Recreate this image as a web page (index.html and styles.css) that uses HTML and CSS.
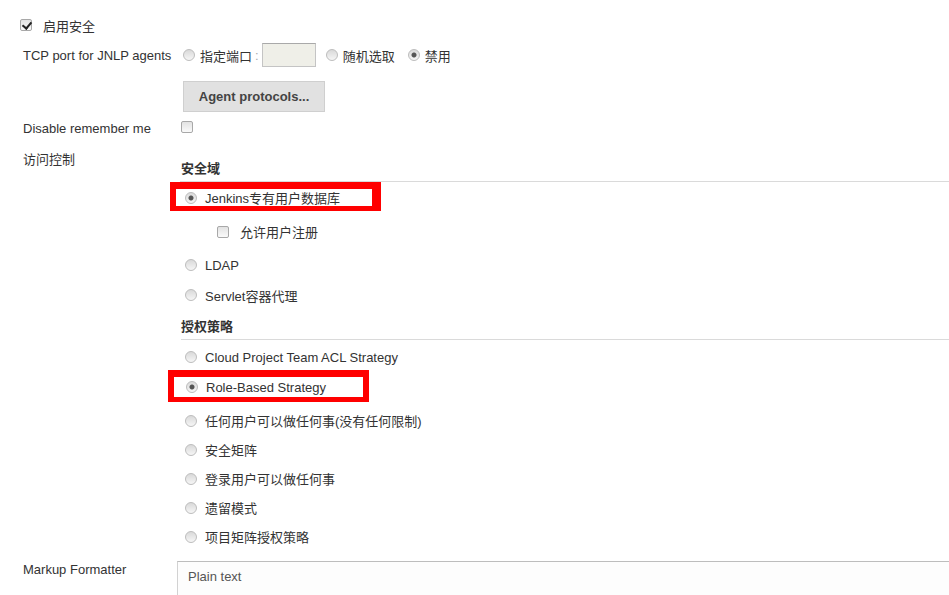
FILE: index.html
```html
<!DOCTYPE html>
<html lang="zh">

<head>
    <meta charset="UTF-8">
    <meta name="viewport" content="width=device-width, initial-scale=1.0">
    <title>Configure Global Security</title>
    <link rel="stylesheet" href="styles.css">
</head>

<body>
    <div id="wrapper">
        <div class="enable">
            <input type="checkbox" class="cb" checked>
            <span>启用安全</span>
        </div>

        <div class="entry tcp">
            <div class="label">TCP port for JNLP agents</div>
            <div class="field ports">
                <label class="choice"><input type="radio" name="port" class="rd">指定端口<span class="colon">:</span></label>
                <input type="text" class="port">
                <label class="choice"><input type="radio" name="port" class="rd">随机选取</label>
                <label class="choice"><input type="radio" name="port" class="rd" checked>禁用</label>
            </div>
        </div>

        <div class="entry agent">
            <div class="label"></div>
            <div class="field">
                <button class="btn">Agent protocols...</button>
            </div>
        </div>

        <div class="entry remember">
            <div class="label">Disable remember me</div>
            <div class="field"><input type="checkbox" class="cb"></div>
        </div>

        <div class="entry access">
            <div class="label">访问控制</div>
            <div class="field">
                <div class="section realm">安全域</div>
                <div class="mark mark-realm">
                    <label class="opt"><input type="radio" name="realm" class="rd" checked>Jenkins专有用户数据库</label>
                </div>
                <label class="sub"><input type="checkbox" class="cb">允许用户注册</label>
                <label class="opt tall first"><input type="radio" name="realm" class="rd">LDAP</label>
                <label class="opt tall"><input type="radio" name="realm" class="rd">Servlet容器代理</label>

                <div class="section auth">授权策略</div>
                <label class="opt short"><input type="radio" name="auth" class="rd">Cloud Project Team ACL Strategy</label>
                <div class="mark mark-role">
                    <label class="opt"><input type="radio" name="auth" class="rd" checked>Role-Based Strategy</label>
                </div>
                <label class="opt first"><input type="radio" name="auth" class="rd">任何用户可以做任何事(没有任何限制)</label>
                <label class="opt"><input type="radio" name="auth" class="rd">安全矩阵</label>
                <label class="opt"><input type="radio" name="auth" class="rd">登录用户可以做任何事</label>
                <label class="opt"><input type="radio" name="auth" class="rd">遗留模式</label>
                <label class="opt"><input type="radio" name="auth" class="rd">项目矩阵授权策略</label>
            </div>
        </div>

        <div class="entry markup">
            <div class="label">Markup Formatter</div>
            <div class="field">
                <div class="select">Plain text</div>
            </div>
        </div>
    </div>
</body>

</html>
```

FILE: styles.css
```css
* {
    margin: 0;
    padding: 0;
    box-sizing: border-box;
}

body {
    background-color: #fff;
    color: #333;
    font-family: "Liberation Sans", Arial, "Noto Sans CJK SC", sans-serif;
    font-size: 13px;
    overflow: hidden;
}

#wrapper {
    padding-top: 10px;
}

/* radio + checkbox */
.rd {
    appearance: none;
    flex: none;
    width: 12px;
    height: 12px;
    border-radius: 50%;
    border: 1px solid #bdbdbd;
    background: linear-gradient(#d9d9d9, #f6f6f6);
}

.rd:checked {
    background: radial-gradient(circle, #555 0 2px, rgba(85, 85, 85, 0) 3px), linear-gradient(#d9d9d9, #f6f6f6);
}

.cb {
    appearance: none;
    flex: none;
    position: relative;
    width: 12px;
    height: 12px;
    border: 1px solid #a8a8a8;
    border-radius: 2px;
    background: linear-gradient(#e2e2e2, #fafafa);
}

.cb:checked::after {
    content: "";
    position: absolute;
    left: 3px;
    top: 0;
    width: 4px;
    height: 7px;
    border: solid #222;
    border-width: 0 2px 2px 0;
    transform: rotate(40deg);
}

.enable {
    display: flex;
    align-items: center;
    height: 30px;
    padding-left: 20px;
}

.enable .cb {
    margin-right: 11px;
}

.entry {
    display: flex;
}

.label {
    width: 181px;
    flex: none;
    padding-left: 23px;
}

.field {
    flex: 1;
}

/* TCP row */
.tcp {
    height: 30px;
    align-items: center;
}

.ports {
    display: flex;
    align-items: center;
    padding-left: 2px;
}

.choice {
    display: flex;
    align-items: center;
    margin-right: 13px;
}

.choice .rd {
    margin-right: 5px;
}

.choice:first-child {
    margin-right: 3px;
}

.colon {
    margin-left: 3px;
    color: #aaa;
}

.port {
    width: 54px;
    height: 24px;
    margin-right: 10px;
    border: 1px solid #c4c4c4;
    border-top-color: #a9a9a9;
    background-color: #efefe8;
}

.agent {
    margin-top: 11px;
}

.btn {
    width: 142px;
    height: 31px;
    margin-left: 2px;
    border: 1px solid #cfcfcf;
    background-color: #e1e1e1;
    color: #444;
    font-family: inherit;
    font-size: 13px;
    font-weight: bold;
}

.remember {
    margin-top: 4px;
    height: 24px;
    align-items: center;
}

.access {
    margin-top: 8px;
}

.access > .label {
    line-height: 24px;
}

/* section headers */
.section {
    padding-top: 8px;
    line-height: 25px;
    font-weight: bold;
    color: #333;
    border-bottom: 1px solid #dadada;
    margin-left: -1px;
    padding-left: 1px;
}

.section.auth {
    padding-top: 4px;
    margin-left: 0;
    padding-left: 0;
}

.opt {
    display: flex;
    align-items: center;
    height: 29px;
    padding-left: 4px;
}

.opt .rd {
    margin-right: 8px;
}

.opt.tall {
    height: 30px;
}

.opt.first {
    margin-top: 4px;
}

.opt.short {
    margin-top: 4px;
    height: 26px;
}

.sub {
    display: flex;
    align-items: center;
    height: 29px;
    margin-top: 6px;
    padding-left: 36px;
}

.sub .cb {
    margin-right: 11px;
}

/* red annotation boxes */
.mark {
    border: 6px solid #f00;
    border-top-width: 7px;
    border-bottom-width: 5px;
}

.mark .opt {
    height: 100%;
}

.mark-realm {
    width: 211px;
    height: 29px;
    margin-left: -11px;
    border-right-width: 9px;
}

.mark-realm .opt {
    padding-left: 9px;
}

.mark-role {
    width: 201px;
    height: 32px;
    margin-left: -13px;
}

.mark-role .opt {
    padding-left: 12px;
}

.markup {
    margin-top: 10px;
}

.markup > .label {
    line-height: 16px;
    padding-top: 1px;
}

.select {
    margin-left: -4px;
    height: 40px;
    padding: 7px 10px;
    line-height: 16px;
    border: 1px solid #d2d2d2;
    border-top-color: #bdbdbd;
    border-right: none;
    background-color: #fdfdfd;
    color: #555;
}
```
